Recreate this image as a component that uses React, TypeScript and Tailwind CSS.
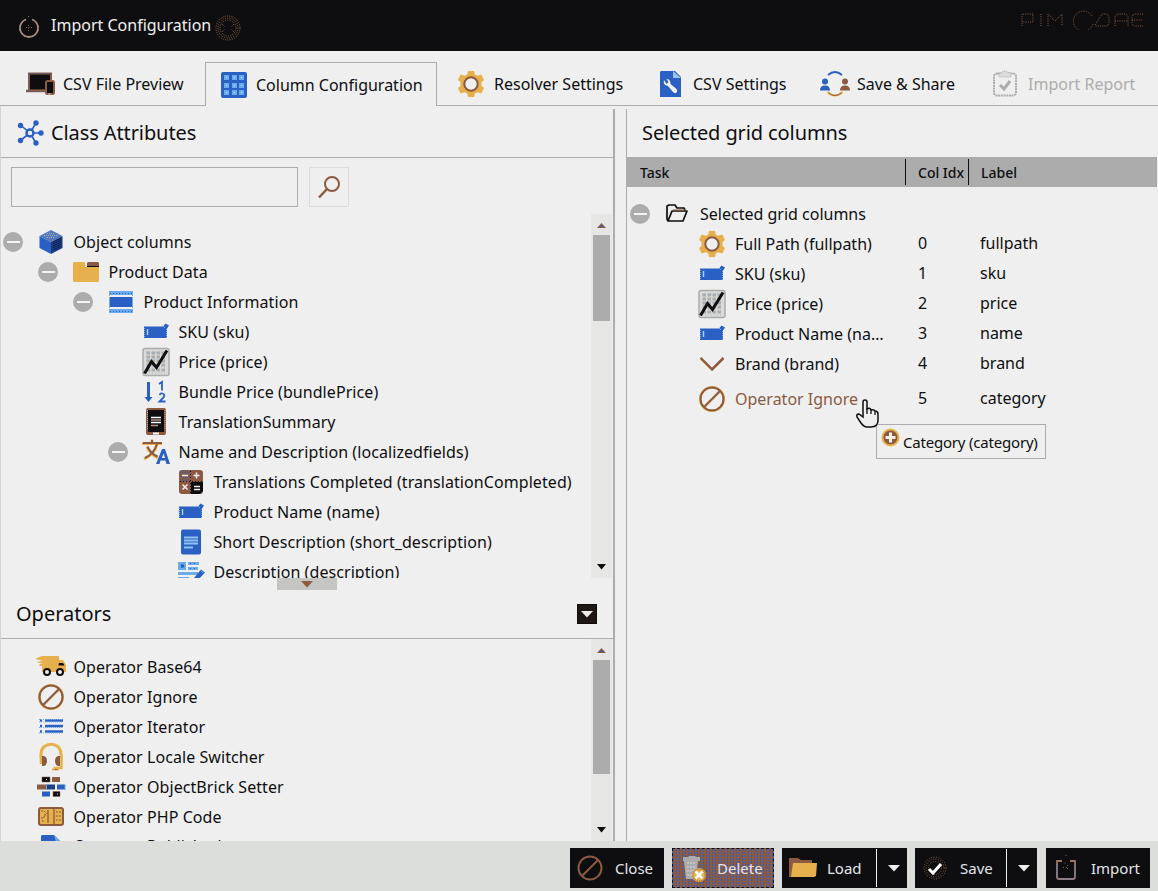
import React from "react";

type IconName =
  | "cube" | "folder" | "panel" | "input" | "chart" | "sort" | "summary" | "translate" | "calc"
  | "doc" | "wysiwyg" | "truck" | "ignore" | "list" | "headset" | "bricks" | "code" | "file"
  | "gear" | "chevron" | "openFolder" | "laptop" | "grid" | "wrench" | "share" | "report" | "network";

const BR = "#8c5a40";
const GO = "#e6b04c";
const BL = "#2a5fc4";
const LB = "#6aabec";
const BK = "#0e0e10";
const GR = "#acacac";

const art: Record<IconName, React.ReactNode> = {
  cube: (
    <>
      <path d="M14 2 25.500 8 14 14 2.500 8Z" fill="#5679bb" />
      <path d="M2.500 8 14 14V26L2.500 20Z" fill={BL} />
      <path d="M25.500 8 14 14V26L25.500 20Z" fill="#163b86" />
      <path d="M7 7.500h14M10 5.500h8M10 9.500h8" stroke="#a9adb5" strokeDasharray="1 1" />
      <path d="M17 13v10M19 12v10M21 11v10M23 10v10" stroke={BK} strokeDasharray="1 1" />
    </>
  ),
  folder: (
    <>
      <path d="M15 5 16 4h10l1 1v4H15Z" fill={BR} />
      <path d="M15 8.500h12" stroke={BK} />
      <path d="M1 5 2 4h10l1 1v4h14v14l-1 1H2l-1-1Z" fill={GO} />
    </>
  ),
  panel: (
    <>
      <path d="M2 3h24v4H2ZM2 21h24v4H2Z" fill={LB} />
      <path d="M3 5.500h22M3 23.500h22" stroke={BL} strokeDasharray="1 2" />
      <path d="M2.500 9h23v10h-23Z" fill={BL} />
      <path d="M2.500 3v22M25.500 3v22" stroke={LB} strokeDasharray="1 1" />
    </>
  ),
  input: (
    <>
      <path d="M2 8.500h19L23.500 5.500l3.500 2L25 10.500V20H2Z" fill={BL} />
      <path d="M2.500 8v12M24.500 11v9" stroke={LB} strokeDasharray="1 1" />
      <path d="M5.500 11v6" stroke="#a9cdf5" strokeWidth="1.500" />
      <path d="m21 8 2 2" stroke={LB} />
    </>
  ),
  chart: (
    <>
      <rect x="1" y="0.500" width="26" height="27" rx="2" fill="#dadbd9" stroke={GR} strokeWidth="1.500" />
      <path d="M4.500 5H24M4.500 9H24M4.500 13H24M4.500 17H24M4.500 22H24" stroke={GR} strokeWidth="3" strokeDasharray="3.500 1.500" />
      <path d="M4 4h20M4 11h20M4 19h20M4 25h20" stroke="#9dbce0" strokeDasharray="1 2" />
      <path d="m2.500 25.500 7-12 5 6L25 2.500" stroke={BK} strokeWidth="3" fill="none" />
    </>
  ),
  sort: (
    <>
      <path d="M5 4h3v15h2.500L6.500 24 2.500 19H5Z" fill={BL} />
      <path d="m17 6 3-2v8.500" stroke={BL} strokeWidth="1.800" fill="none" />
      <path d="M17.500 17q1-2 3-1.500 3 .8 1 4L17.500 23.500h6" stroke={BL} strokeWidth="1.800" fill="none" />
    </>
  ),
  summary: (
    <>
      <rect x="5" y="1" width="18" height="25" rx="1" fill={BK} stroke={BR} strokeWidth="2" />
      <path d="M5 24h18v3H5Z" fill={BR} />
      <path d="M11 25.500h6" stroke="#fff" strokeWidth="2" />
      <path d="M9 9.500h10M9 14.500h10" stroke="#fff" strokeWidth="1.500" />
      <path d="M9 12h10M9 17.500h7" stroke="#b89383" strokeWidth="1.500" />
      <path d="M5.500 2v20M23 2v20" stroke={GR} strokeDasharray="1 1" />
    </>
  ),
  translate: (
    <>
      <path d="M0 5.500h20M10 1.500v4M5 9q3 7 11 11M15 6Q13 16 2 21" stroke={GO} strokeWidth="2.800" fill="none" />
      <path d="M1 5h19M10 2v3M5.500 8.500q3 7 10 10M15 6Q12 16 3 20" stroke={BR} strokeWidth="2" fill="none" />
      <path d="M20 11h3l5 15h-3.500l-1-3.500h-5L17.500 26H14Zm1.500 4.500-1.700 4.500h3.200Z" fill={BL} fillRule="evenodd" />
    </>
  ),
  calc: (
    <>
      <rect x="2" y="2" width="24" height="24" rx="3" fill={BR} />
      <path d="M4 5h9M4 9h9M4 12h9M4 3h9" stroke={BL} strokeDasharray="1 1" />
      <path d="M14 14h12v9l-3 3h-9Z" fill={BK} />
      <path d="M5 7.500h6M16.500 7.500h6M19.500 4.500v6M5.500 16.500l5 5M10.500 16.500l-5 5M17 18.500h6M17 21.500h6" stroke="#eee" strokeWidth="1.500" />
      <path d="M3 13.500h22M13.500 3v22" stroke={BK} strokeDasharray="1 2" />
    </>
  ),
  doc: (
    <>
      <rect x="4" y="1.500" width="20" height="25" rx="2" fill={BL} />
      <path d="M7 9.500h14M7 12.500h14M7 15.500h14M7 19.500h9" stroke="#8fc1f4" strokeWidth="2" />
    </>
  ),
  wysiwyg: (
    <>
      <path d="M1 4h8v8H1ZM11 4h11v3H11ZM11 9h10v3H11ZM1 14h20v3H1ZM1 19h11v2H1Z" fill={LB} />
      <path d="M4 6.500h3v3H4ZM13 5.500h7M13 10.500h6" fill={BL} stroke={BL} strokeDasharray="1 3" />
      <path d="m17 20 7-8.500 4 3L21 22l-5 1Z" fill={BL} />
      <path d="m23.500 12.500 3 2.500" stroke={LB} />
    </>
  ),
  truck: (
    <>
      <path d="M-1 5h1L5 3h17v4h4l3 5v7H5V13H2L3 11H6L-1 9 6 8-1 6Z" fill={GO} />
      <path d="M22 10h4l1.500 2.500h-6Z" fill={BK} />
      <circle cx="10" cy="19" r="3" fill="#f5efe4" stroke={BK} strokeWidth="2" />
      <circle cx="23" cy="19" r="3" fill="#f5efe4" stroke={BK} strokeWidth="2" />
    </>
  ),
  ignore: (
    <>
      <circle cx="14" cy="14" r="11.800" fill="none" stroke={GO} strokeWidth="2.400" />
      <circle cx="14" cy="14" r="11.500" fill="none" stroke={BR} strokeWidth="2" />
      <path d="M6 22 22 6" stroke={BR} strokeWidth="2.200" />
      <path d="M7.500 22.500 22.500 7.500" stroke={GO} strokeWidth=".5" />
    </>
  ),
  list: (
    <>
      <path d="M3 7.500h2M3 13h2M3 18.500h2M8 7.500h18M8 13h18M8 18.500h18" stroke={BL} strokeWidth="2.500" />
      <path d="M2 6.500h24M2 9h24M2 14.500h24M2 20h24" stroke={LB} strokeDasharray="1 1" />
    </>
  ),
  headset: (
    <>
      <path d="M4 15V11C4-2 24-2 24 11V15" stroke={GO} strokeWidth="3" fill="none" />
      <path d="M4 12v9M24.500 12v13h-8" stroke={GO} strokeWidth="2.500" fill="none" />
      <path d="M5 13h2q3 1 3 5t-3 5H5ZM23 13h-2q-3 1-3 5t3 5h2Z" fill={BR} />
      <path d="M15 26.500h7" stroke={GO} strokeWidth="2" />
      <path d="M18 26.500h2" stroke={BR} />
    </>
  ),
  bricks: (
    <>
      <path d="M5 4h8v5H5ZM16 18.500h7v5h-7Z" fill={BK} stroke={BR} strokeWidth=".5" />
      <path d="M15 4h8v5h-8ZM0 11.500h9v5H0Z" fill={BR} />
      <path d="M10 11.500h8v5h-8Z" fill="#1c3e87" />
      <path d="M20 11.500h8v5h-8ZM5 18.500h8v5H5Z" fill={BL} />
      <path d="M9 6.500h1M20 21h1" stroke="#ddd" />
      <path d="M9.500 11v6M28 12v5" stroke={LB} />
    </>
  ),
  code: (
    <>
      <rect x="2" y="5" width="24" height="17" rx="2" fill={GO} stroke={BR} strokeWidth="2" />
      <path d="M11 7v13M17 6v15" stroke={BR} strokeWidth="1.300" />
      <path d="M4 8h3l3 3M4 15h3v-3h3M19 9h5M19 13h5M19 17h5M5 18h3" stroke={BR} strokeDasharray="2 1" fill="none" />
    </>
  ),
  file: (
    <>
      <path d="M4 3 5 2h12l7 7v17H4Z" fill={BL} />
      <path d="m17 2 7 7h-5Z" fill={LB} />
    </>
  ),
  gear: (
    <>
      <path d="M11 1h6l.8 3.500 2.500 1.200 4-1.200 2.700 5.500-2.500 2v4l2.500 2-2.700 5.500-4-1.200-2.500 1.200L17 27h-6l-.8-3.500-2.500-1.200-4 1.200L1 18l2.500-2v-4L1 10l2.700-5.500 4 1.200 2.500-1.200Z" fill={GO} />
      <circle cx="14" cy="14" r="6.700" fill="#efefef" stroke={BR} strokeWidth="2" />
    </>
  ),
  chevron: (
    <>
      <path d="M2.500 8 14 19.500 25.500 8" stroke={BR} strokeWidth="2.500" fill="none" />
      <path d="M2 9 14 21" stroke={GO} strokeWidth=".6" />
    </>
  ),
  openFolder: (
    <>
      <path d="M5 21 4 19V6l2-1h6l2 3h7l1 2M5 21h15l4-10H9Z" stroke={BK} strokeWidth="1.700" fill="none" strokeLinejoin="round" />
      <path d="M10 10h12" stroke={BR} />
    </>
  ),
  laptop: (
    <>
      <path d="M3 3.500h22v17H3Z" fill={BK} stroke={BR} strokeWidth="2" />
      <path d="M0 21h20" stroke={BR} strokeWidth="2.500" />
      <path d="M1 21.500h20M3 3.500h22M3.500 4v17" stroke={BL} strokeDasharray="1 2" />
      <rect x="20" y="11" width="8" height="13" rx="1.500" fill={BK} stroke={BR} strokeWidth="2" />
      <path d="M22.500 24h2" stroke="#eee" />
    </>
  ),
  grid: (
    <>
      <rect x="1" y="1" width="26" height="26" rx="2" fill={BL} />
      {[4, 12, 19].map((x) =>
        [4, 12, 19].map((y) => (
          <g key={x + "-" + y}>
            <rect x={x} y={y} width="5" height="5" fill={LB} />
            <path d={`M${x + 2} ${y + 2.5}h1`} stroke="#cfe1f4" />
          </g>
        )),
      )}
    </>
  ),
  wrench: (
    <>
      <path d="M5 1h14l6 6v20H4V2Z" fill={BL} />
      <path d="m17 1 8 7h-8Z" fill="#9fc5ef" />
      <path d="M8 10q-1.500 5 4 6l5 6q2 2 3.500.5t0-3.500l-6-5q0-5-4-5l2 3-2 2Z" fill="#f2f2f2" />
    </>
  ),
  share: (
    <>
      <path d="M7 5q7-6 14 0" fill="none" stroke={BL} strokeWidth="2" />
      <path d="M6.500 22q7.500 7 15 0" fill="none" stroke={GO} strokeWidth="2" />
      <path d="M7.500 23q6.500 5 13 0" fill="none" stroke={BR} />
      <circle cx="4" cy="11.500" r="3" fill={BL} />
      <path d="M-1 20.500q0-5 5-5t5 5Z" fill={BL} />
      <circle cx="24" cy="11.500" r="3" fill={BR} />
      <path d="M19 20.500q0-5 5-5t5 5Z" fill={BR} />
    </>
  ),
  report: (
    <>
      <rect x="3" y="3.500" width="22" height="22" rx="3" fill="none" stroke={GR} strokeWidth="2" strokeDasharray="2 .7" />
      <path d="M8 3h3l1-2h4l1 2h3v4H8Z" fill="#dcdcdc" stroke={GR} strokeDasharray="1 1" />
      <path d="m9 15 4 4 6-8" fill="none" stroke={GR} strokeWidth="3" />
    </>
  ),
  network: (
    <>
      <path d="M14 14 5 6.500M14 14l6-10M14 14h12M14 14l6 10M14 14l-9 7" stroke={BL} strokeWidth="1.600" />
      <circle cx="14" cy="14" r="3.500" fill="#efefef" stroke={BL} strokeWidth="2.500" />
      {[[4.5, 6.500], [20, 4], [25, 14], [20, 24], [4.5, 21.500]].map(([cx, cy]) => (
        <circle key={cx + "-" + cy} cx={cx} cy={cy} r="2.700" fill={BL} />
      ))}
    </>
  ),
};

function Icon({ name }: { name: IconName }) {
  return (
    <svg className="h-7 w-7 shrink-0 overflow-visible" viewBox="0 0 28 28">
      {art[name]}
    </svg>
  );
}

function Expander() {
  return (
    <span className="flex h-5 w-5 shrink-0 items-center justify-center rounded-full bg-[#acacac]">
      <span className="h-[2px] w-[13px] bg-[#f4f4f4]" />
    </span>
  );
}

const indent = ["pl-[2px]", "pl-[37px]", "pl-[72px]", "pl-[107px]", "pl-[142px]"];

interface Row {
  depth: number;
  icon: IconName;
  text: string;
  open?: boolean;
}

const attributes: Row[] = [
  { depth: 0, icon: "cube", text: "Object columns", open: true },
  { depth: 1, icon: "folder", text: "Product Data", open: true },
  { depth: 2, icon: "panel", text: "Product Information", open: true },
  { depth: 3, icon: "input", text: "SKU (sku)" },
  { depth: 3, icon: "chart", text: "Price (price)" },
  { depth: 3, icon: "sort", text: "Bundle Price (bundlePrice)" },
  { depth: 3, icon: "summary", text: "TranslationSummary" },
  { depth: 3, icon: "translate", text: "Name and Description (localizedfields)", open: true },
  { depth: 4, icon: "calc", text: "Translations Completed (translationCompleted)" },
  { depth: 4, icon: "input", text: "Product Name (name)" },
  { depth: 4, icon: "doc", text: "Short Description (short_description)" },
  { depth: 4, icon: "wysiwyg", text: "Description (description)" },
];

const operators: Row[] = [
  { depth: 0, icon: "truck", text: "Operator Base64" },
  { depth: 0, icon: "ignore", text: "Operator Ignore" },
  { depth: 0, icon: "list", text: "Operator Iterator" },
  { depth: 0, icon: "headset", text: "Operator Locale Switcher" },
  { depth: 0, icon: "bricks", text: "Operator ObjectBrick Setter" },
  { depth: 0, icon: "code", text: "Operator PHP Code" },
  { depth: 0, icon: "file", text: "Operator Published" },
];

function TreeRow({ row }: { row: Row }) {
  return (
    <div className={`flex h-[30px] items-center tracking-[0.07px] ${indent[row.depth]}`}>
      <span className="flex w-[34px] shrink-0">{row.open && <Expander />}</span>
      <Icon name={row.icon} />
      <span className={`ml-[8.500px] whitespace-nowrap ${row.icon === "file" ? "mb-[3px]" : ""}`}>{row.text}</span>
    </div>
  );
}

function Scrollbar({ thumb }: { thumb: string }) {
  return (
    <div className="mr-[1px] flex w-[21px] shrink-0 flex-col items-center bg-[#e6e7e5]">
      <svg className="h-[21px] w-[9px] shrink-0" viewBox="0 0 9 21">
        <path d="M0 14 4.500 9 9 14Z" fill={BR} />
        <path d="m2 13 2.500-2L7 13Z" fill={BL} />
      </svg>
      <div className={`w-[17px] shrink-0 bg-[#acacac] ${thumb}`} />
      <div className="flex-1" />
      <svg className="h-[21px] w-[9px] shrink-0" viewBox="0 0 9 21">
        <path d="M0 7h9L4.500 12.500Z" fill={BK} />
      </svg>
    </div>
  );
}

function Tab({ icon, text, className, gap }: { icon: IconName; text: string; className: string; gap: string }) {
  return (
    <div className={`flex shrink-0 items-center ${className}`}>
      <Icon name={icon} />
      <span className={`whitespace-nowrap ${gap}`}>{text}</span>
    </div>
  );
}

const columns: { icon: IconName; task: string; label: string }[] = [
  { icon: "gear", task: "Full Path (fullpath)", label: "fullpath" },
  { icon: "input", task: "SKU (sku)", label: "sku" },
  { icon: "chart", task: "Price (price)", label: "price" },
  { icon: "input", task: "Product Name (name)", label: "name" },
  { icon: "chevron", task: "Brand (brand)", label: "brand" },
  { icon: "ignore", task: "Operator Ignore", label: "category" },
];

function Caret() {
  return (
    <svg className="h-2 w-3" viewBox="0 0 12 8">
      <path d="M0 1h12L6 7.500Z" fill="#eee" />
    </svg>
  );
}

const button = "flex h-10 shrink-0 items-center bg-[#0e0e10] text-[15px] text-[#e4e6e8]";

export default function App() {
  return (
    <div className="flex h-[891px] w-[1158px] flex-col overflow-hidden bg-[#efefef] font-['Noto_Sans','Open_Sans',sans-serif] text-[16px] leading-[30px] text-[#0e0e10]">
      <header className="flex h-[51px] shrink-0 items-center bg-[#0e0e10] pl-[18px] text-[#f0f0f0]">
        <svg className="mt-1 h-6 w-[22px]" viewBox="0 0 22 24">
          <path d="M8 3.500a9 9 0 1 0 6 0" fill="none" stroke="#a98676" strokeWidth="1.800" />
          <path d="M8 3.500a9 9 0 1 0 6 0" fill="none" stroke="#9bb3dc" strokeWidth="1" strokeDasharray="1 3" />
          <path d="M10.500 0v1M8 11.500h6M10.500 9v6" stroke={BR} strokeDasharray="1 1.500" />
        </svg>
        <span className="mb-[2px] ml-[11px] w-[164px] whitespace-nowrap">Import Configuration</span>
        <svg className="mt-1 h-[26px] w-[26px]" viewBox="0 0 26 26">
          <g fill="none" stroke="#97634a" strokeDasharray="1 1.300">
            <circle cx="13" cy="13" r="12" />
            <circle cx="13" cy="13" r="10" />
            <circle cx="13" cy="13" r="8" />
            <path d="m7 9 3 3M19 9l-3 3M7 17l3-3M19 17l-3-3" />
          </g>
        </svg>
        <svg className="mt-[-11px] mr-[13px] ml-auto h-[20px] w-[125px]" viewBox="0 0 125 20">
          <g fill="none" stroke="#8c5a40" strokeDasharray="1 1.200">
            <path d="M2 16V4h11v8H2M21 4v13M28 16V4l7 7 7-7v12" />
            <path d="M73 14A10 10 0 1 1 72 6M75 15l7-11h5l2 3v7l-2 2H75M95 16V6l3-2h8l2 2v10M95 11h13M123 4h-9l-2 2v8l2 2h9M112 10h11" />
          </g>
        </svg>
      </header>

      <nav className="flex h-[55px] shrink-0 pt-[11px]">
        <Tab icon="laptop" text="CSV File Preview" gap="ml-[9px]" className="w-[205px] border-b border-[#acacac] pl-[26px]" />
        <Tab icon="grid" text="Column Configuration" gap="ml-[8px]" className="w-[232px] border border-b-0 border-[#acacac] pl-[14px]" />
        <Tab icon="gear" text="Resolver Settings" gap="ml-[9px]" className="w-[219px] border-b border-[#acacac] pl-[20px]" />
        <Tab icon="wrench" text="CSV Settings" gap="ml-[9px]" className="w-[165px] border-b border-[#acacac]" />
        <Tab icon="share" text="Save & Share" gap="ml-[8px]" className="w-[170px] border-b border-[#acacac]" />
        <Tab icon="report" text="Import Report" gap="ml-[9px]" className="flex-1 border-b border-[#acacac] text-[#acacac]" />
      </nav>

      <main className="flex h-[735px] shrink-0">
        <section className="flex w-[613px] shrink-0 flex-col border-l border-[#d4d4d4]">
          <h2 className="flex h-[52px] shrink-0 items-center border-b border-[#acacac] pt-[3px] pl-[15px] text-[20px] tracking-[-0.1px]">
            <Icon name="network" />
            <span className="ml-[7px] whitespace-nowrap">Class Attributes</span>
          </h2>
          <div className="flex h-[56px] shrink-0 gap-[11px] pt-[9px] pl-[10px]">
            <div className="h-10 w-[287px] border border-[#acacac]" />
            <div className="flex h-10 w-10 items-center justify-center border border-[#dcdcdc]">
              <svg className="h-6 w-6" viewBox="0 0 24 24">
                <circle cx="15" cy="9" r="7" fill="none" stroke={BR} strokeWidth="2" />
                <path d="m10 14-8 8.500" stroke={BR} strokeWidth="2.500" />
              </svg>
            </div>
          </div>
          <div className="flex h-[364px] shrink-0">
            <div className="min-w-0 flex-1 overflow-hidden pt-[13px]">
              {attributes.map((row) => (
                <TreeRow key={row.text} row={row} />
              ))}
            </div>
            <Scrollbar thumb="h-[86px]" />
          </div>
          <div className="flex h-3 shrink-0 pl-[276px]">
            <div className="flex w-[60px] items-center justify-center bg-[#c5c6c4]">
              <svg className="h-[7px] w-3" viewBox="0 0 12 7">
                <path d="M0 0h12L6 6.500Z" fill={BR} />
              </svg>
            </div>
          </div>
          <h2 className="flex h-[49px] shrink-0 items-center justify-between border-b border-[#acacac] pr-[16px] pl-[15px] text-[20px]">
            <span>Operators</span>
            <span className="flex h-5 w-5 items-center justify-center border border-[#0e0e10] bg-[#1f1714]">
              <Caret />
            </span>
          </h2>
          <div className="flex min-h-0 flex-1">
            <div className="min-w-0 flex-1 overflow-hidden pt-[13px]">
              {operators.map((row) => (
                <TreeRow key={row.text} row={row} />
              ))}
            </div>
            <Scrollbar thumb="h-[114px]" />
          </div>
        </section>

        <div className="mt-[3px] w-[14px] shrink-0 border-r border-l-2 border-r-[#acacac] border-l-[#acacac]" />

        <section className="mr-[1px] flex min-w-0 flex-1 flex-col">
          <h2 className="flex h-[51px] shrink-0 items-center pt-[2px] pl-[15px] text-[20px] tracking-[-0.1px]">Selected grid columns</h2>
          <div className="flex h-[30px] shrink-0 items-center bg-[#acacac] text-[14px] font-medium">
            <span className="w-[278px] pt-[2px] pl-[13px]">Task</span>
            <span className="flex h-[26px] w-[63px] items-center border-l border-[#0e0e10] pt-[2px] pl-[12px] whitespace-nowrap">Col Idx</span>
            <span className="flex h-[26px] items-center border-l border-[#0e0e10] pt-[2px] pl-[12px]">Label</span>
          </div>
          <div className="relative pt-[12px]">
            <div className="flex h-[30px] items-center pl-[3px]">
              <Expander />
              <span className="ml-[13px] flex">
                <Icon name="openFolder" />
              </span>
              <span className="ml-[9px]">Selected grid columns</span>
            </div>
            {columns.map((column, index) => (
              <div key={column.label} className={`flex h-[30px] items-center pl-[71px] ${index === 5 ? "mt-[5px]" : ""}`}>
                <Icon name={column.icon} />
                <span className={`ml-[9px] w-[152px] truncate ${index === 5 ? "text-[#8c5a40]" : ""}`}>{column.task}</span>
                <span className="mb-[2px] ml-[31px] w-[62px]">{index}</span>
                <span className="mb-[2px]">{column.label}</span>
              </div>
            ))}
            <div className="absolute top-[237px] left-[249px] flex h-[35px] w-[170px] items-center border border-[#acacac] bg-[#efefef] pl-[4px] text-[15px] tracking-[-0.2px]">
              <svg className="mb-[8px] h-[19px] w-[19px] shrink-0" viewBox="0 0 19 19">
                <circle cx="9.500" cy="9.500" r="8" fill={BR} stroke={GO} strokeWidth="2" />
                <path d="M9.500 4.500v10M4.500 9.500h10" stroke="#f4efe6" strokeWidth="3" />
              </svg>
              <span className="ml-[3px] whitespace-nowrap">Category (category)</span>
            </div>
            <svg className="absolute top-[211px] left-[228px] h-[31px] w-[24px]" viewBox="0 0 24 31">
              <path d="M8 19V4q0-2 2-2t2 2v7q3-2 4 1 3-1 4 1 3 0 3 3v6q0 7-7 7h-4q-3 0-6-4l-4-6q-1-3 2-3Z" fill="#efefef" stroke={BK} strokeWidth="1.500" />
              <path d="M12 10v6M16 12v4M20 13v4" stroke={BK} strokeWidth="1.300" />
            </svg>
          </div>
        </section>
      </main>

      <footer className="flex h-[50px] shrink-0 items-start gap-2 bg-[#dcdedb] pt-[7px] pl-[570px]">
        <button className={`${button} w-[94px] pl-[7px]`}>
          <svg className="h-[26px] w-[26px]" viewBox="0 0 26 26">
            <circle cx="13" cy="13" r="11.500" fill="none" stroke={BR} strokeWidth="2" />
            <path d="M5.500 20.500 20.500 5.500" stroke={BR} strokeWidth="2" />
          </svg>
          <span className="ml-[12px]">Close</span>
        </button>
        <button className="flex h-10 w-[102px] shrink-0 items-center border border-dashed border-[#0e0e10] bg-[#8c5a43] bg-[conic-gradient(#8c5a43_75%,#2a5fc4_0)] bg-[length:3px_3px] pl-[9px] text-[15px] text-[#e4e6e8]">
          <svg className="h-7 w-7 shrink-0 overflow-visible" viewBox="0 0 28 28">
            <path d="M1 3h5l1-1h6l1 1h4v4h-2l-2 18H4L2 7H1Z" fill={GR} />
            <path d="M6 8v15M9 8v15M12 8v15" stroke="#d9d9d9" strokeDasharray="2 2" />
            <circle cx="17" cy="21" r="7" fill={GO} />
            <circle cx="17" cy="21" r="6" fill="none" stroke={BR} strokeDasharray="1 1" />
            <path d="m13.500 17.500 7 7m0-7-7 7" stroke="#fff" strokeWidth="2.500" />
          </svg>
          <span className="ml-[7px]">Delete</span>
        </button>
        <button className={`${button} w-[125px] pl-[7px]`}>
          <svg className="h-[26px] w-7 shrink-0" viewBox="0 0 28 26">
            <path d="M0 3h9l3 2h11v5L4 22H0Z" fill={BR} />
            <path d="M4 8h24l-1 13-2 1H2Z" fill={GO} />
          </svg>
          <span className="ml-[10px] w-[49px] text-left">Load</span>
          <span className="flex h-[38px] flex-1 items-center justify-center border-l border-[#eee] pl-[4px]">
            <Caret />
          </span>
        </button>
        <button className={`${button} w-[122px] pl-[8px]`}>
          <svg className="h-6 w-6 shrink-0" viewBox="0 0 24 24">
            <g fill="none" stroke={BR} strokeDasharray="1 1.500">
              <circle cx="12" cy="12" r="11" />
              <circle cx="12" cy="12" r="9" />
              <circle cx="12" cy="12" r="6.500" />
            </g>
            <path d="m6 13 4 4 8-9" fill="none" stroke="#fff" strokeWidth="3" />
          </svg>
          <span className="ml-[13px] w-[46px] text-left">Save</span>
          <span className="flex h-[38px] flex-1 items-center justify-center border-l border-[#eee] pl-[4px]">
            <Caret />
          </span>
        </button>
        <button className={`${button} ml-[1px] w-[104px] pl-[10px]`}>
          <svg className="h-[26px] w-5 shrink-0" viewBox="0 0 20 26">
            <path d="M6 6H1v16q0 2 2 2h14q2 0 2-2V6h-5" fill="none" stroke="#9a7566" strokeWidth="1.800" />
            <path d="M1 9v13l2 2h14l2-2V9" fill="none" stroke="#5d91e4" strokeDasharray="1 1" />
            <path d="M10 0v1M9 7.500v2M11.500 10v6M7 12.500h5" stroke={BR} strokeDasharray="1 2" />
          </svg>
          <span className="ml-[15px]">Import</span>
        </button>
      </footer>
    </div>
  );
}
